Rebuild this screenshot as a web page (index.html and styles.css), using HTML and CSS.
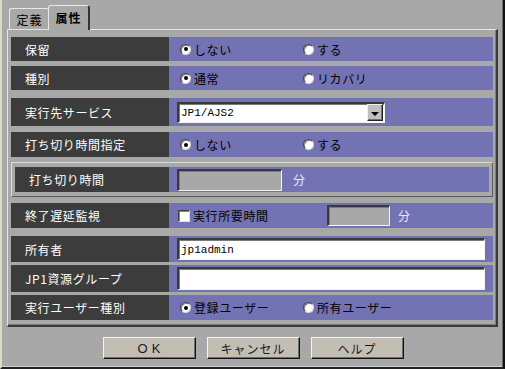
FILE: index.html
```html
<!DOCTYPE html>
<html lang="ja">
<head>
<meta charset="utf-8">
<link rel="stylesheet" href="styles.css">
</head>
<body>
<div class="window">
  <div class="tabs">
    <div class="tab">定義</div>
    <div class="tab active">属性</div>
  </div>
  <div class="panel">
    <div class="row r1">
      <div class="label">保留</div>
      <div class="value">
        <span class="opt"><span class="radio on"></span>しない</span>
        <span class="opt"><span class="radio"></span>する</span>
      </div>
    </div>
    <div class="row r2">
      <div class="label">種別</div>
      <div class="value">
        <span class="opt"><span class="radio on"></span>通常</span>
        <span class="opt"><span class="radio"></span>リカバリ</span>
      </div>
    </div>
    <div class="row r3">
      <div class="label">実行先サービス</div>
      <div class="value">
        <div class="select"><span class="select-text">JP1/AJS2</span><span class="drop"><span class="arrow"></span></span></div>
      </div>
    </div>
    <div class="row r4">
      <div class="label">打ち切り時間指定</div>
      <div class="value">
        <span class="opt"><span class="radio on"></span>しない</span>
        <span class="opt"><span class="radio"></span>する</span>
      </div>
    </div>
    <div class="group">
      <div class="row inner">
        <div class="label">打ち切り時間</div>
        <div class="value">
          <span class="field gray f-time"></span><span class="unit u-time">分</span>
        </div>
      </div>
    </div>
    <div class="row r6">
      <div class="label">終了遅延監視</div>
      <div class="value">
        <span class="check-opt"><span class="checkbox"></span>実行所要時間</span>
        <span class="field gray f-delay"></span><span class="unit u-delay">分</span>
      </div>
    </div>
    <div class="row r7">
      <div class="label">所有者</div>
      <div class="value">
        <span class="field wide"><span class="mono">jp1admin</span></span>
      </div>
    </div>
    <div class="row r8">
      <div class="label">JP1資源グループ</div>
      <div class="value">
        <span class="field wide"></span>
      </div>
    </div>
    <div class="row r9">
      <div class="label">実行ユーザー種別</div>
      <div class="value">
        <span class="opt"><span class="radio on"></span>登録ユーザー</span>
        <span class="opt"><span class="radio"></span>所有ユーザー</span>
      </div>
    </div>
  </div>
  <div class="buttons">
    <button class="btn ok">OK</button>
    <button class="btn">キャンセル</button>
    <button class="btn">ヘルプ</button>
  </div>
</div>
</body>
</html>
```
FILE: styles.css
```css
html, body {
  margin: 0;
  padding: 0;
  background: #a8a8a8;
}
body {
  font-family: "Noto Sans CJK JP", "Liberation Sans", sans-serif;
  font-size: 12px;
}
.window {
  box-sizing: border-box;
  width: 505px;
  height: 369px;
  background: #a8a8a8;
  border-left: 2px solid #dcd8cb;
  border-right: 2px solid #111;
  border-bottom: 2px solid #222;
  box-shadow: inset -1px 0 #6c6c6c, inset 0 -1px #d4d4d4;
  padding: 5px 4px 0 5px;
  display: flex;
  flex-direction: column;
}
.tabs {
  display: flex;
  align-items: flex-end;
  height: 24px;
  padding-left: 2px;
  flex: none;
}
.tab {
  box-sizing: border-box;
  height: 21px;
  width: 40px;
  border-top: 1px solid #e8e8e8;
  border-left: 1px solid #e8e8e8;
  border-radius: 3px 3px 0 0;
  font-size: 12px;
  letter-spacing: 1px;
  display: flex;
  align-items: center;
  justify-content: center;
  color: #000;
  padding-top: 1px;
}
.tab.active {
  height: 25px;
  width: 42px;
  margin-left: -1px;
  font-weight: bold;
  margin-bottom: -1px;
  position: relative;
  z-index: 1;
  background: #a8a8a8;
  border-right: 2px solid #333;
  padding-top: 0;
  padding-bottom: 2px;
}
.panel {
  box-sizing: border-box;
  width: 491px;
  height: 298px;
  flex: none;
  border-top: 1px solid #e4e4e4;
  border-left: 1px solid #e4e4e4;
  border-right: 2px solid #3a3a3a;
  border-bottom: 2px solid #3a3a3a;
  box-shadow: inset -1px -1px #7c7c7c;
  padding: 7px 0 0 3px;
  display: flex;
  flex-direction: column;
}
.row {
  display: flex;
  width: 482px;
  height: 24px;
  flex: none;
}
.r2 { margin-top: 5px; }
.r3 { margin-top: 8px; height: 28px; }
.r4 { margin-top: 6px; height: 25px; }
.r6 { margin-top: 6px; height: 25px; }
.r7 { margin-top: 8px; height: 26px; }
.r8 { margin-top: 3px; height: 27px; }
.r9 { margin-top: 3px; height: 25px; }
.group {
  box-sizing: border-box;
  width: 482px;
  height: 35px;
  margin-top: 5px;
  border: 1px solid;
  border-color: #dcdcdc #5c5c5c #5c5c5c #dcdcdc;
  padding: 4px 3px;
  flex: none;
}
.row.inner {
  width: 474px;
  height: 25px;
}
.label {
  box-sizing: border-box;
  width: 158px;
  flex: none;
  background: #3c3c3c;
  color: #fff;
  font-size: 12px;
  letter-spacing: 0.6px;
  padding-left: 14px;
  display: flex;
  align-items: center;
}
.inner .label {
  width: 154px;
}
.value {
  flex: 1;
  background: #7373b4;
  display: flex;
  align-items: center;
  padding-left: 8px;
  font-size: 12px;
  letter-spacing: 0.6px;
  color: #000;
}
.opt {
  display: flex;
  align-items: center;
  width: 123px;
  flex: none;
}
.radio {
  box-sizing: border-box;
  width: 11px;
  height: 11px;
  margin-left: 3px;
  margin-right: 3px;
  border-radius: 50%;
  background: #fff;
  border: 1px solid;
  border-color: #404040 #d8d8d8 #d8d8d8 #404040;
  box-shadow: inset 1px 1px #888;
  display: flex;
  align-items: center;
  justify-content: center;
  flex: none;
}
.radio.on::after {
  content: "";
  width: 4px;
  height: 4px;
  border-radius: 50%;
  background: #000;
}
.check-opt {
  display: flex;
  align-items: center;
  width: 150px;
  flex: none;
}
.checkbox {
  box-sizing: border-box;
  width: 12px;
  height: 12px;
  margin-left: 1px;
  margin-right: 3px;
  background: #fff;
  border: 1px solid;
  border-color: #404040 #e0e0e0 #e0e0e0 #404040;
  box-shadow: inset 1px 1px #888;
  flex: none;
}
.field {
  box-sizing: border-box;
  height: 22px;
  background: #fff;
  border: 2px solid;
  border-color: #3a3a3a #f4f4f4 #f4f4f4 #3a3a3a;
  border-right-width: 1px;
  border-bottom-width: 1px;
  box-shadow: inset 1px 1px #7a7a7a;
  display: flex;
  align-items: center;
  flex: none;
}
.field.gray {
  background: #a8a8a8;
}
.f-time { width: 105px; }
.f-delay { width: 63px; height: 21px; }
.field.wide { width: 308px; }
.r8 .field.wide { height: 23px; }
.unit {
  color: #e8e8f0;
  font-size: 12px;
}
.u-time { margin-left: 11px; }
.u-delay { margin-left: 8px; }
.mono {
  font-family: "Liberation Mono", "DejaVu Sans Mono", monospace;
  font-size: 11px;
  letter-spacing: 0;
  padding-left: 2px;
  color: #000;
}
.select {
  box-sizing: border-box;
  width: 208px;
  height: 21px;
  background: #fff;
  border: 2px solid;
  border-color: #3a3a3a #f4f4f4 #f4f4f4 #3a3a3a;
  border-right-width: 1px;
  border-bottom-width: 1px;
  box-shadow: inset 1px 1px #7a7a7a;
  display: flex;
  align-items: center;
  justify-content: space-between;
}
.select-text {
  font-family: "Liberation Mono", "DejaVu Sans Mono", monospace;
  font-size: 11px;
  letter-spacing: 0;
  padding-left: 2px;
}
.drop {
  box-sizing: border-box;
  width: 16px;
  height: 17px;
  margin-right: 1px;
  background: #c0c0c0;
  border: 1px solid;
  border-color: #f0f0f0 #202020 #202020 #f0f0f0;
  box-shadow: inset -1px -1px #707070;
  display: flex;
  align-items: center;
  justify-content: center;
}
.arrow {
  width: 0;
  height: 0;
  border-left: 4px solid transparent;
  border-right: 4px solid transparent;
  border-top: 4px solid #000;
  margin-top: 2px;
}
.buttons {
  display: flex;
  justify-content: center;
  gap: 11px;
  margin-top: 10px;
  flex: none;
}
.btn {
  box-sizing: border-box;
  width: 93px;
  height: 22px;
  margin: 0;
  padding: 0;
  background: #c2beb4;
  border: 1px solid;
  border-color: #f4f4f4 #111 #111 #f4f4f4;
  box-shadow: inset -1px -1px #6c6c6c;
  font-family: "Noto Sans CJK JP", "Liberation Sans", sans-serif;
  font-size: 12px;
  letter-spacing: 1px;
  color: #1a1a1a;
  display: flex;
  align-items: center;
  justify-content: center;
}
.btn.ok {
  letter-spacing: 4px;
  padding-left: 4px;
  font-family: "Liberation Sans", sans-serif;
  font-size: 13px;
}
```
